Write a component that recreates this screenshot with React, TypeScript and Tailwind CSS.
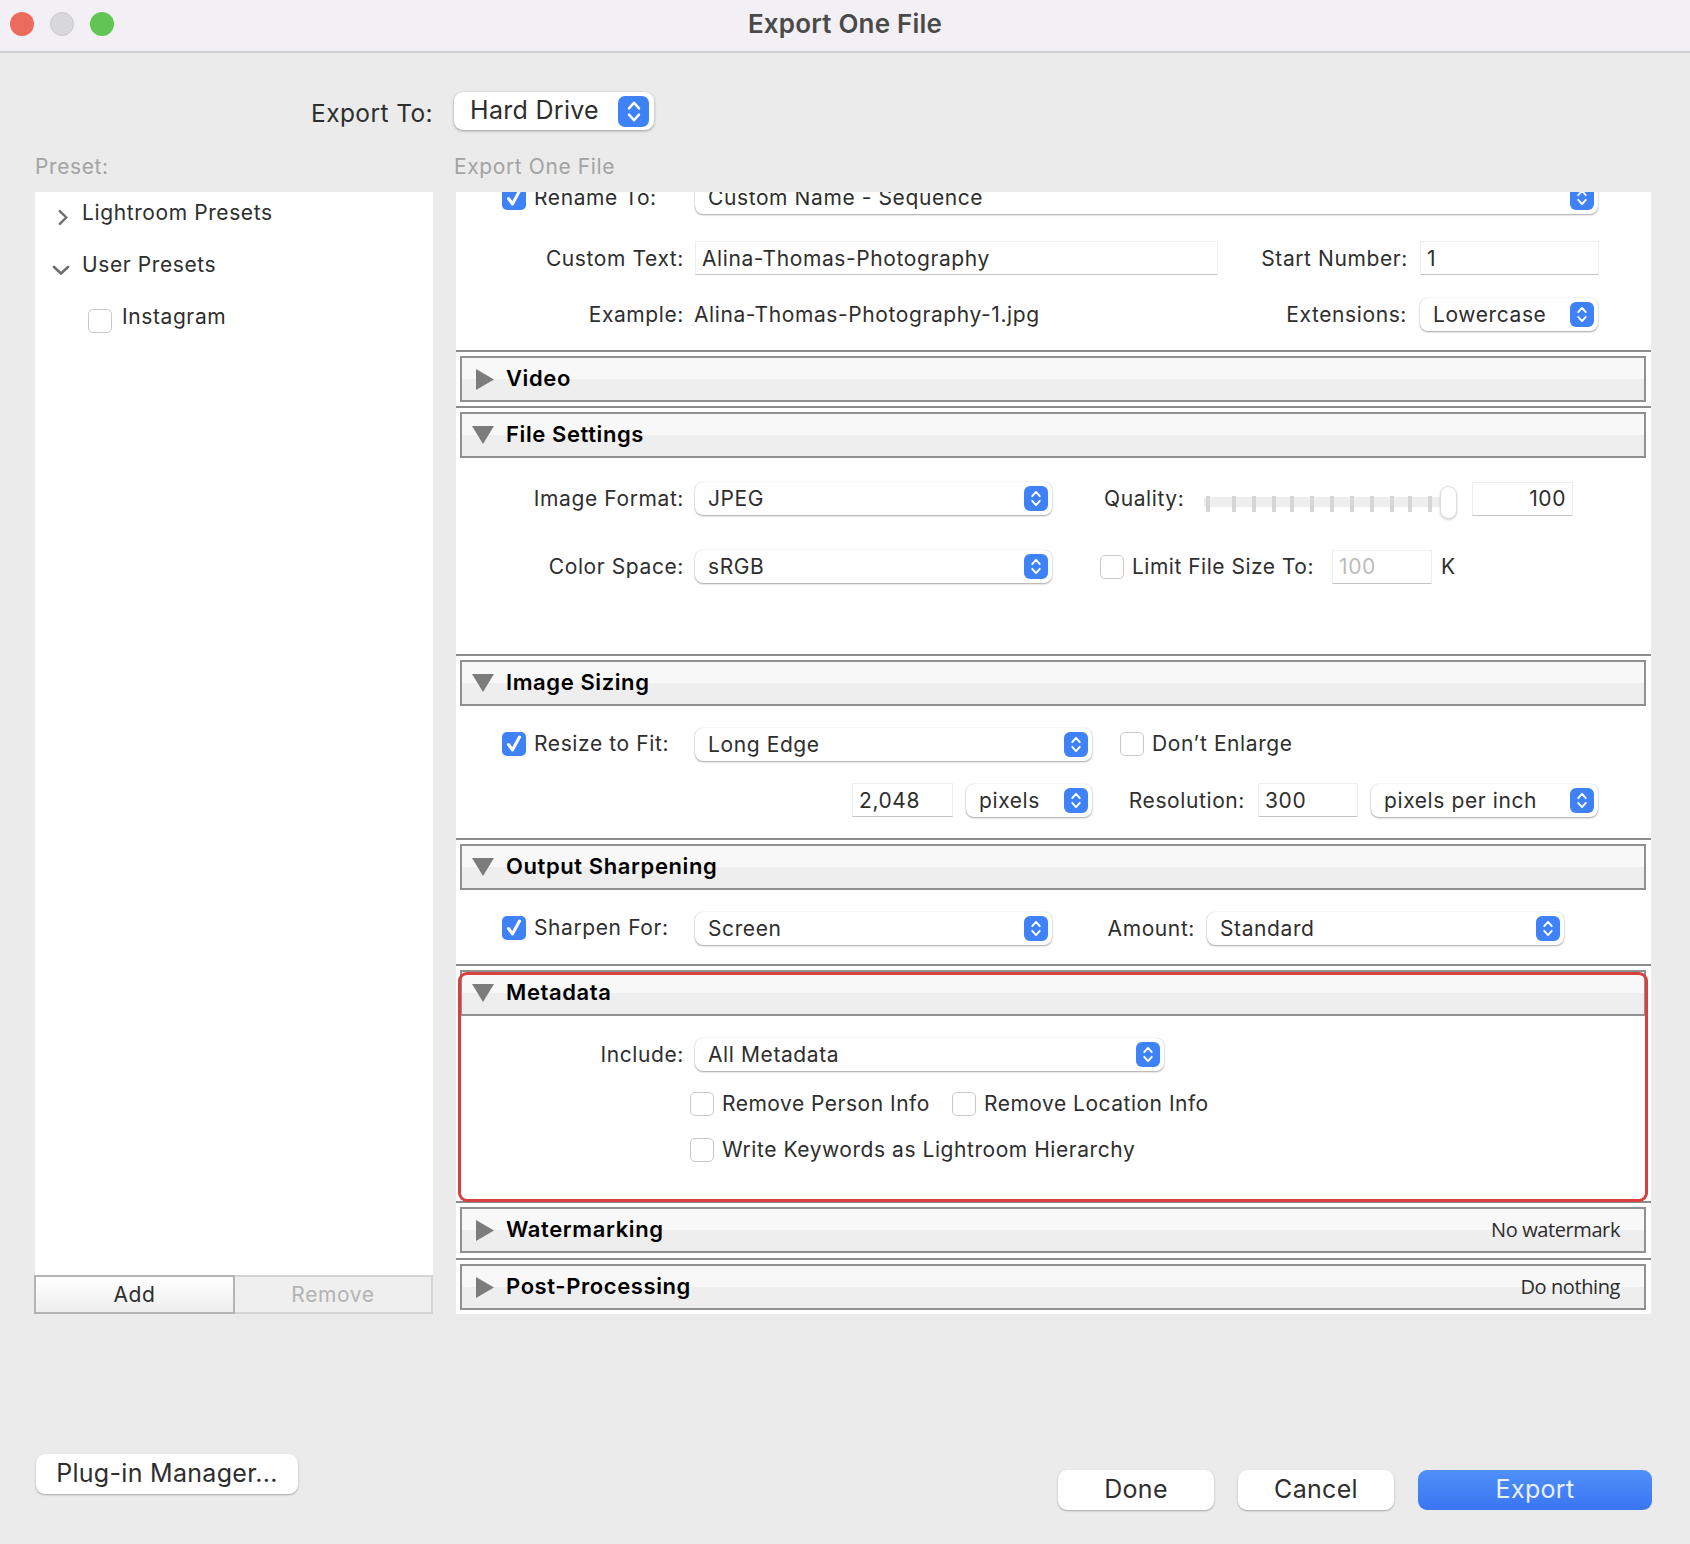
import React from "react";

const Stepper = ({ big }: { big?: boolean }) => (
  <span
    className={
      big
        ? "flex h-[31px] w-[31px] items-center justify-center rounded-[7px] bg-[#3f82f7]"
        : "flex h-[25px] w-[24px] items-center justify-center rounded-[6px] bg-[#3f82f7]"
    }
  >
    <svg viewBox="0 0 14 20" className={big ? "h-[25px] w-[18px]" : "h-[19px] w-[14px]"} fill="none" stroke="#fff" strokeWidth="2" strokeLinecap="round" strokeLinejoin="round">
      <path d="M3 7.5 7 3l4 4.5" />
      <path d="M3 12.5 7 17l4-4.5" />
    </svg>
  </span>
);

const Select = ({ className, children }: { className: string; children: React.ReactNode }) => (
  <div className={"flex h-[33px] shrink-0 items-center justify-between rounded-[8px] bg-white pl-[13px] pr-1 shadow-[0_1px_2px_rgba(0,0,0,0.35),0_0_1px_rgba(0,0,0,0.2)] " + className}>
    <span>{children}</span>
    <Stepper />
  </div>
);

const Field = ({ className, children }: { className: string; children: React.ReactNode }) => (
  <div className={"flex h-[34px] shrink-0 items-center border border-[#eeeeee] border-b-[#c4c4c4] bg-white px-[6px] " + className}>
    {children}
  </div>
);

const Check = ({ on, className }: { on?: boolean; className?: string }) =>
  on ? (
    <span className={"flex h-[24px] w-[24px] shrink-0 items-center justify-center rounded-[5px] bg-[#3f82f7] " + (className ?? "")}>
      <svg viewBox="0 0 24 24" className="h-[24px] w-[24px]" fill="none" stroke="#fff" strokeWidth="3" strokeLinecap="round" strokeLinejoin="round">
        <path d="M6.5 12.5 10.5 18 17.5 5" />
      </svg>
    </span>
  ) : (
    <span className={"h-[24px] w-[24px] shrink-0 rounded-[5px] border border-[#c9c9c9] bg-white " + (className ?? "")} />
  );

const Label = ({ className, children }: { className: string; children: React.ReactNode }) => (
  <span className={"shrink-0 whitespace-nowrap text-right " + className}>{children}</span>
);

const Caption = ({ className, children }: { className: string; children: React.ReactNode }) => (
  <span className={"shrink-0 whitespace-nowrap " + className}>{children}</span>
);

const SectionHead = ({ title, open, note }: { title: string; open?: boolean; note?: string }) => (
  <div>
    <div className="h-[2px] bg-[#8c8c8c]" />
    <div className="ml-[4px] mr-[5px] mt-[4px] flex h-[46px] items-center border-2 border-[#909090] bg-[linear-gradient(#f8f8f8_50%,#eeeeee_50%)] pl-[10px] pr-[24px]">
      {open ? (
        <svg viewBox="0 0 22 18" className="h-[18px] w-[22px] shrink-0 fill-[#7c7c7c]">
          <path d="M0 0h22L11 18z" />
        </svg>
      ) : (
        <svg viewBox="0 0 18 21" className="ml-[4px] h-[21px] w-[18px] shrink-0 fill-[#7c7c7c]">
          <path d="M0 0l18 10.5L0 21z" />
        </svg>
      )}
      <span className="-mt-[2px] ml-[12px] text-[22px] font-semibold text-black">{title}</span>
      {note && <span className="ml-auto font-['Open_Sans'] text-[20px] tracking-[-0.4px] text-[#2c2c2c]">{note}</span>}
    </div>
  </div>
);

const tickXs = [2, 28, 48, 68, 86, 106, 126, 146, 166, 186, 204, 224];

const Slider = () => (
  <div className="ml-[20px] mt-[8px] flex items-center">
    <svg width="236" height="33" viewBox="0 0 236 33">
      <rect x="0" y="11" width="236" height="10" fill="#eeeeee" />
      {tickXs.map((x) => (
        <rect key={x} x={x} y="10" width="4" height="16" fill="#d6d6d6" />
      ))}
    </svg>
    <div className="h-[33px] w-[17px] rounded-full border border-[#dddddd] bg-white shadow-[0_1px_2px_rgba(0,0,0,0.2)]" />
  </div>
);

export default function App() {
  return (
    <div className="flex h-[1544px] w-[1690px] flex-col overflow-hidden bg-[#ebebeb] font-[Inter,sans-serif] text-[21px] tracking-[0.6px] text-[#2e2e2e]">
      {/* title bar */}
      <div className="relative flex h-[53px] shrink-0 items-center justify-center border-b-2 border-[#cfcfcf] bg-[#f2f0f4]">
        <div className="absolute left-[10px] top-[12px] flex gap-[16px]">
          <span className="h-[24px] w-[24px] rounded-full bg-[#ec6a5e]" />
          <span className="h-[24px] w-[24px] rounded-full border border-[#c8c8c8] bg-[#d8d7db]" />
          <span className="h-[24px] w-[24px] rounded-full bg-[#61c554]" />
        </div>
        <span className="-mt-[4px] text-[26px] font-semibold tracking-[0.2px] text-[#4a4a4a]">Export One File</span>
      </div>

      {/* export to */}
      <div className="mt-[39px] flex h-[38px] shrink-0 items-center">
        <span className="mt-[5px] w-[433px] text-right text-[24.5px] tracking-[0.4px]">Export To:</span>
        <div className="ml-[21px] flex h-[38px] w-[200px] items-center justify-between rounded-[9px] bg-white pl-4 pr-[5px] text-[25px] tracking-[0.3px] shadow-[0_1px_3px_rgba(0,0,0,0.35)]">
          <span>Hard Drive</span>
          <Stepper big />
        </div>
      </div>

      <div className="mt-[25px] flex h-[24px] shrink-0 items-center text-[21px] text-[#a3a3a3]">
        <span className="ml-[35px] w-[419px]">Preset:</span>
        <span>Export One File</span>
      </div>

      <div className="mt-[13px] flex h-[1122px] shrink-0">
        {/* presets */}
        <div className="ml-[35px] flex w-[398px] flex-col">
          <div className="flex flex-1 flex-col bg-white">
            <div className="mt-[9px] flex h-[24px] items-center">
              <svg viewBox="0 0 12 18" className="ml-[23px] mt-[8px] h-[17px] w-[11px]" fill="none" stroke="#6e6e6e" strokeWidth="2.6" strokeLinecap="round">
                <path d="M2 2l7 7-7 7" />
              </svg>
              <span className="ml-[13px]">Lightroom Presets</span>
            </div>
            <div className="mt-[28px] flex h-[24px] items-center">
              <svg viewBox="0 0 18 10" className="ml-[17px] mt-[10px] h-[10px] w-[18px]" fill="none" stroke="#6e6e6e" strokeWidth="2.6" strokeLinecap="round">
                <path d="M2 2l7 6.5L16 2" />
              </svg>
              <span className="ml-[12px]">User Presets</span>
            </div>
            <div className="mt-[29px] flex h-[24px] items-center">
              <Check className="ml-[53px] mt-[5px]" />
              <span className="ml-[10px] -mt-[2px]">Instagram</span>
            </div>
          </div>
          <div className="-ml-px flex h-[39px] shrink-0">
            <div className="flex w-[201px] items-center justify-center border-2 border-[#b4b4b4] bg-[linear-gradient(#ffffff,#eeeeee)]">Add</div>
            <div className="flex flex-1 items-center justify-center border-2 border-l-0 border-[#d4d4d4] bg-[#efefef] text-[#b3b3b3]">Remove</div>
          </div>
        </div>

        {/* settings */}
        <div className="ml-[23px] flex w-[1195px] flex-col overflow-hidden bg-white">
          <div className="flex h-[158px] shrink-0 flex-col">
            <div className="-mt-[11px] flex h-[33px] shrink-0 items-center">
              <Check on className="ml-[46px]" />
              <Caption className="ml-[8px] w-[141px]">Rename To:</Caption>
              <Select className="ml-[20px] w-[903px]">Custom Name - Sequence</Select>
            </div>
            <div className="mt-[27px] flex items-center">
              <Label className="w-[228px] pt-[2px]">Custom Text:</Label>
              <Field className="ml-[11px] w-[523px] pt-[2px]">Alina-Thomas-Photography</Field>
              <Label className="w-[190px] pt-[2px]">Start Number:</Label>
              <Field className="ml-[12px] w-[179px] pt-[2px]">1</Field>
            </div>
            <div className="mt-[23px] flex h-[33px] items-center">
              <Label className="w-[228px]">Example:</Label>
              <Caption className="ml-[10px] w-[521px]">Alina-Thomas-Photography-1.jpg</Caption>
              <Label className="w-[192px]">Extensions:</Label>
              <Select className="ml-[13px] w-[178px]">Lowercase</Select>
            </div>
          </div>

          <SectionHead title="Video" />
          <div className="h-[4px] shrink-0" />

          <SectionHead title="File Settings" open />
          <div className="h-[196px] shrink-0 pt-[24px]">
            <div className="flex h-[33px] items-center">
              <Label className="w-[228px]">Image Format:</Label>
              <Select className="ml-[11px] w-[357px]">JPEG</Select>
              <Caption className="ml-[52px] w-[80px]">Quality:</Caption>
              <Slider />
              <Field className="ml-[15px] w-[101px] justify-end pr-[6px]">100</Field>
            </div>
            <div className="mt-[35px] flex h-[33px] items-center">
              <Label className="w-[228px]">Color Space:</Label>
              <Select className="ml-[11px] w-[357px]">sRGB</Select>
              <Check className="ml-[48px]" />
              <Caption className="ml-[8px] w-[182px] tracking-[0.5px]">Limit File Size To:</Caption>
              <Field className="ml-[18px] w-[100px] text-[#bdbdbd]">100</Field>
              <span className="ml-[9px]">K</span>
            </div>
          </div>

          <SectionHead title="Image Sizing" open />
          <div className="h-[132px] shrink-0 pt-[22px]">
            <div className="flex h-[33px] items-center">
              <Check on className="-mt-[2px] ml-[46px]" />
              <Caption className="-mt-[2px] ml-[8px] w-[141px]">Resize to Fit:</Caption>
              <Select className="ml-[20px] w-[397px]">Long Edge</Select>
              <Check className="-mt-[2px] ml-[28px]" />
              <span className="-mt-[2px] ml-[8px]">Don’t Enlarge</span>
            </div>
            <div className="mt-[22px] flex h-[34px] items-center">
              <Field className="ml-[396px] w-[101px] pt-[2px]">2,048</Field>
              <Select className="ml-[13px] w-[126px] pt-[1px]">pixels</Select>
              <Label className="w-[153px] pt-[2px]">Resolution:</Label>
              <Field className="ml-[13px] w-[100px] pt-[2px]">300</Field>
              <Select className="ml-[13px] w-[227px] pt-[1px]">pixels per inch</Select>
            </div>
          </div>

          <SectionHead title="Output Sharpening" open />
          <div className="h-[74px] shrink-0 pt-[22px]">
            <div className="flex h-[33px] items-center">
              <Check on className="-mt-[2px] ml-[46px]" />
              <Caption className="-mt-[2px] ml-[8px] w-[141px]">Sharpen For:</Caption>
              <Select className="ml-[20px] w-[357px]">Screen</Select>
              <Label className="w-[143px]">Amount:</Label>
              <Select className="ml-[12px] w-[357px]">Standard</Select>
            </div>
          </div>

          <div className="relative shrink-0">
            <SectionHead title="Metadata" open />
            <div className="h-[185px] pt-[22px]">
              <div className="flex h-[33px] items-center">
                <Label className="w-[228px]">Include:</Label>
                <Select className="ml-[11px] w-[469px]">All Metadata</Select>
              </div>
              <div className="mt-[21px] flex h-[24px] items-center tracking-[0.5px]">
                <Check className="ml-[234px]" />
                <Caption className="ml-[8px] w-[230px]">Remove Person Info</Caption>
                <Check />
                <span className="ml-[8px]">Remove Location Info</span>
              </div>
              <div className="mt-[22px] flex h-[24px] items-center tracking-[0.55px]">
                <Check className="ml-[234px]" />
                <span className="ml-[8px]">Write Keywords as Lightroom Hierarchy</span>
              </div>
            </div>
            {/* red annotation box */}
            <div className="absolute left-[2px] top-[8px] h-[230px] w-[1190px] rounded-[9px] border-[3px] border-[#d83f3f]" />
          </div>

          <SectionHead title="Watermarking" note="No watermark" />
          <div className="h-[5px] shrink-0" />
          <SectionHead title="Post-Processing" note="Do nothing" />
        </div>
      </div>

      {/* footer */}
      <div className="mt-[140px] flex items-start">
        <div className="ml-[36px] flex h-[40px] w-[262px] items-center justify-center rounded-[9px] bg-white text-[25px] tracking-[0.3px] shadow-[0_1px_2px_rgba(0,0,0,0.3)]">
          Plug-in Manager...
        </div>
        <div className="ml-[760px] mt-[16px] flex gap-[24px] text-[25px] tracking-[0.3px]">
          <div className="flex h-[40px] w-[156px] items-center justify-center rounded-[9px] bg-white shadow-[0_1px_2px_rgba(0,0,0,0.3)]">Done</div>
          <div className="flex h-[40px] w-[156px] items-center justify-center rounded-[9px] bg-white shadow-[0_1px_2px_rgba(0,0,0,0.3)]">Cancel</div>
          <div className="flex h-[40px] w-[234px] items-center justify-center rounded-[9px] bg-[linear-gradient(#4f90f9,#3a75f2)] text-[#e9f1ff]">Export</div>
        </div>
      </div>
    </div>
  );
}
